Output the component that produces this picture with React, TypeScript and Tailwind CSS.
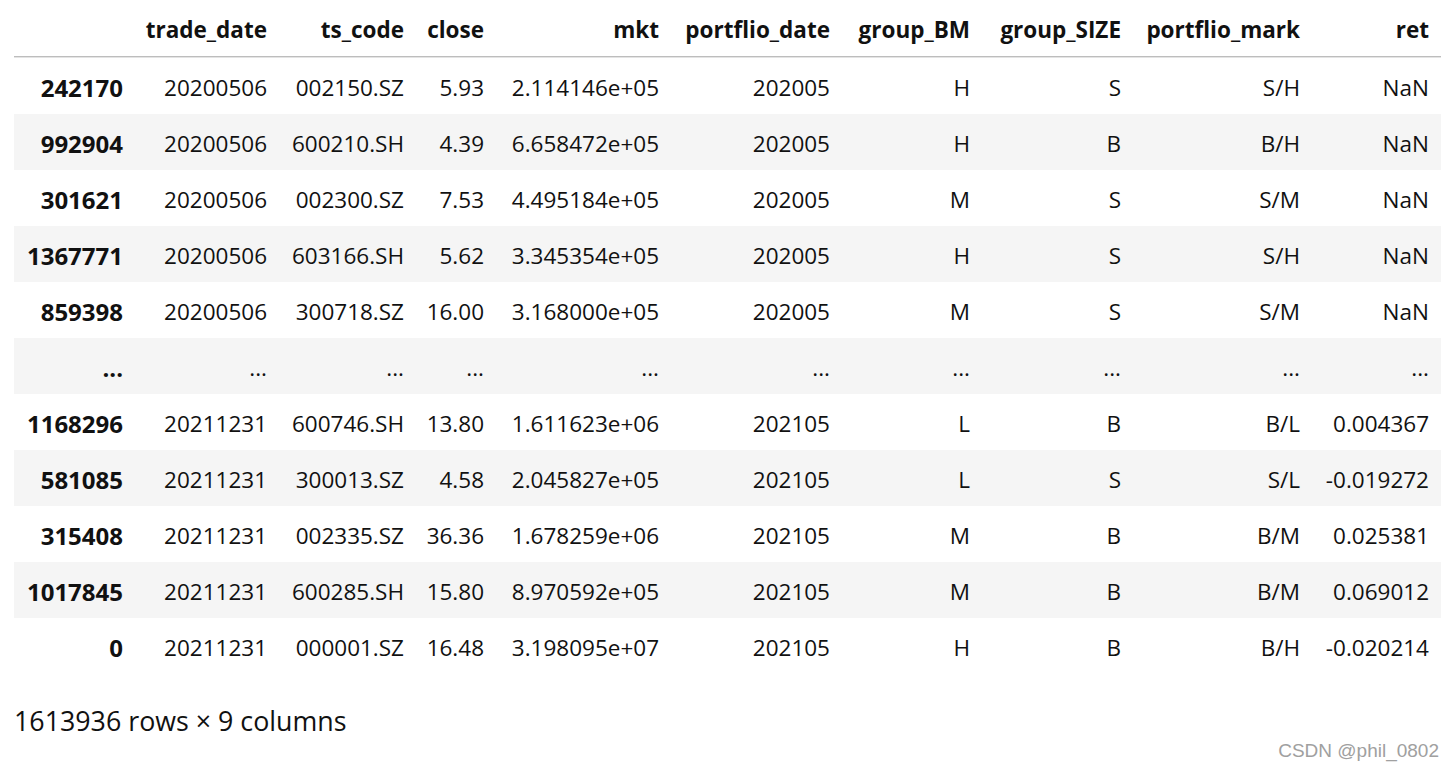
import React from "react";

const cols = ["", "trade_date", "ts_code", "close", "mkt", "portflio_date", "group_BM", "group_SIZE", "portflio_mark", "ret"];

const rows: string[][] = [
  ["242170", "20200506", "002150.SZ", "5.93", "2.114146e+05", "202005", "H", "S", "S/H", "NaN"],
  ["992904", "20200506", "600210.SH", "4.39", "6.658472e+05", "202005", "H", "B", "B/H", "NaN"],
  ["301621", "20200506", "002300.SZ", "7.53", "4.495184e+05", "202005", "M", "S", "S/M", "NaN"],
  ["1367771", "20200506", "603166.SH", "5.62", "3.345354e+05", "202005", "H", "S", "S/H", "NaN"],
  ["859398", "20200506", "300718.SZ", "16.00", "3.168000e+05", "202005", "M", "S", "S/M", "NaN"],
  ["...", "...", "...", "...", "...", "...", "...", "...", "...", "..."],
  ["1168296", "20211231", "600746.SH", "13.80", "1.611623e+06", "202105", "L", "B", "B/L", "0.004367"],
  ["581085", "20211231", "300013.SZ", "4.58", "2.045827e+05", "202105", "L", "S", "S/L", "-0.019272"],
  ["315408", "20211231", "002335.SZ", "36.36", "1.678259e+06", "202105", "M", "B", "B/M", "0.025381"],
  ["1017845", "20211231", "600285.SH", "15.80", "8.970592e+05", "202105", "M", "B", "B/M", "0.069012"],
  ["0", "20211231", "000001.SZ", "16.48", "3.198095e+07", "202105", "H", "B", "B/H", "-0.020214"],
];

const grid =
  "grid grid-cols-[121px_144px_137px_80px_175px_171px_140px_151px_179px_129px]";

export default function App() {
  return (
    <div
      className="w-[1454px] h-[769px] bg-white text-[#111] relative overflow-hidden"
      style={{ fontFamily: '"Open Sans", "Noto Sans", sans-serif' }}
    >
      <div className="ml-[14px] w-[1427px]">
        <div className={`${grid} h-[56px] pt-[4px] items-center font-bold text-[22.5px]`}>
          {cols.map((c, i) => (
            <div key={i} className="text-right pr-[12px] whitespace-nowrap">
              {c}
            </div>
          ))}
        </div>
        <div className="h-[1px] bg-[#bdbdbd]" />
        <div className="h-[1px] bg-[#e4e4e4]" />
        {rows.map((r, ri) => (
          <div
            key={ri}
            className={`${grid} h-[56px] pt-[3px] items-center text-[22.5px] ${ri % 2 === 1 ? "bg-[#f5f5f5]" : "bg-white"}`}
          >
            {r.map((v, ci) => (
              <div
                key={ci}
                className={`text-right pr-[12px] whitespace-nowrap ${ci === 0 ? "font-bold text-[24px]" : ""}`}
              >
                {v}
              </div>
            ))}
          </div>
        ))}
      </div>
      <div className="ml-[14px] mt-[29px] text-[26.8px] leading-[36px]">1613936 rows × 9 columns</div>
      <div
        className="absolute right-[15px] top-[737px] text-[19px] text-[#a0a0a0]"
        style={{ fontFamily: '"Liberation Sans", Arial, sans-serif' }}
      >
        CSDN @phil_0802
      </div>
    </div>
  );
}
